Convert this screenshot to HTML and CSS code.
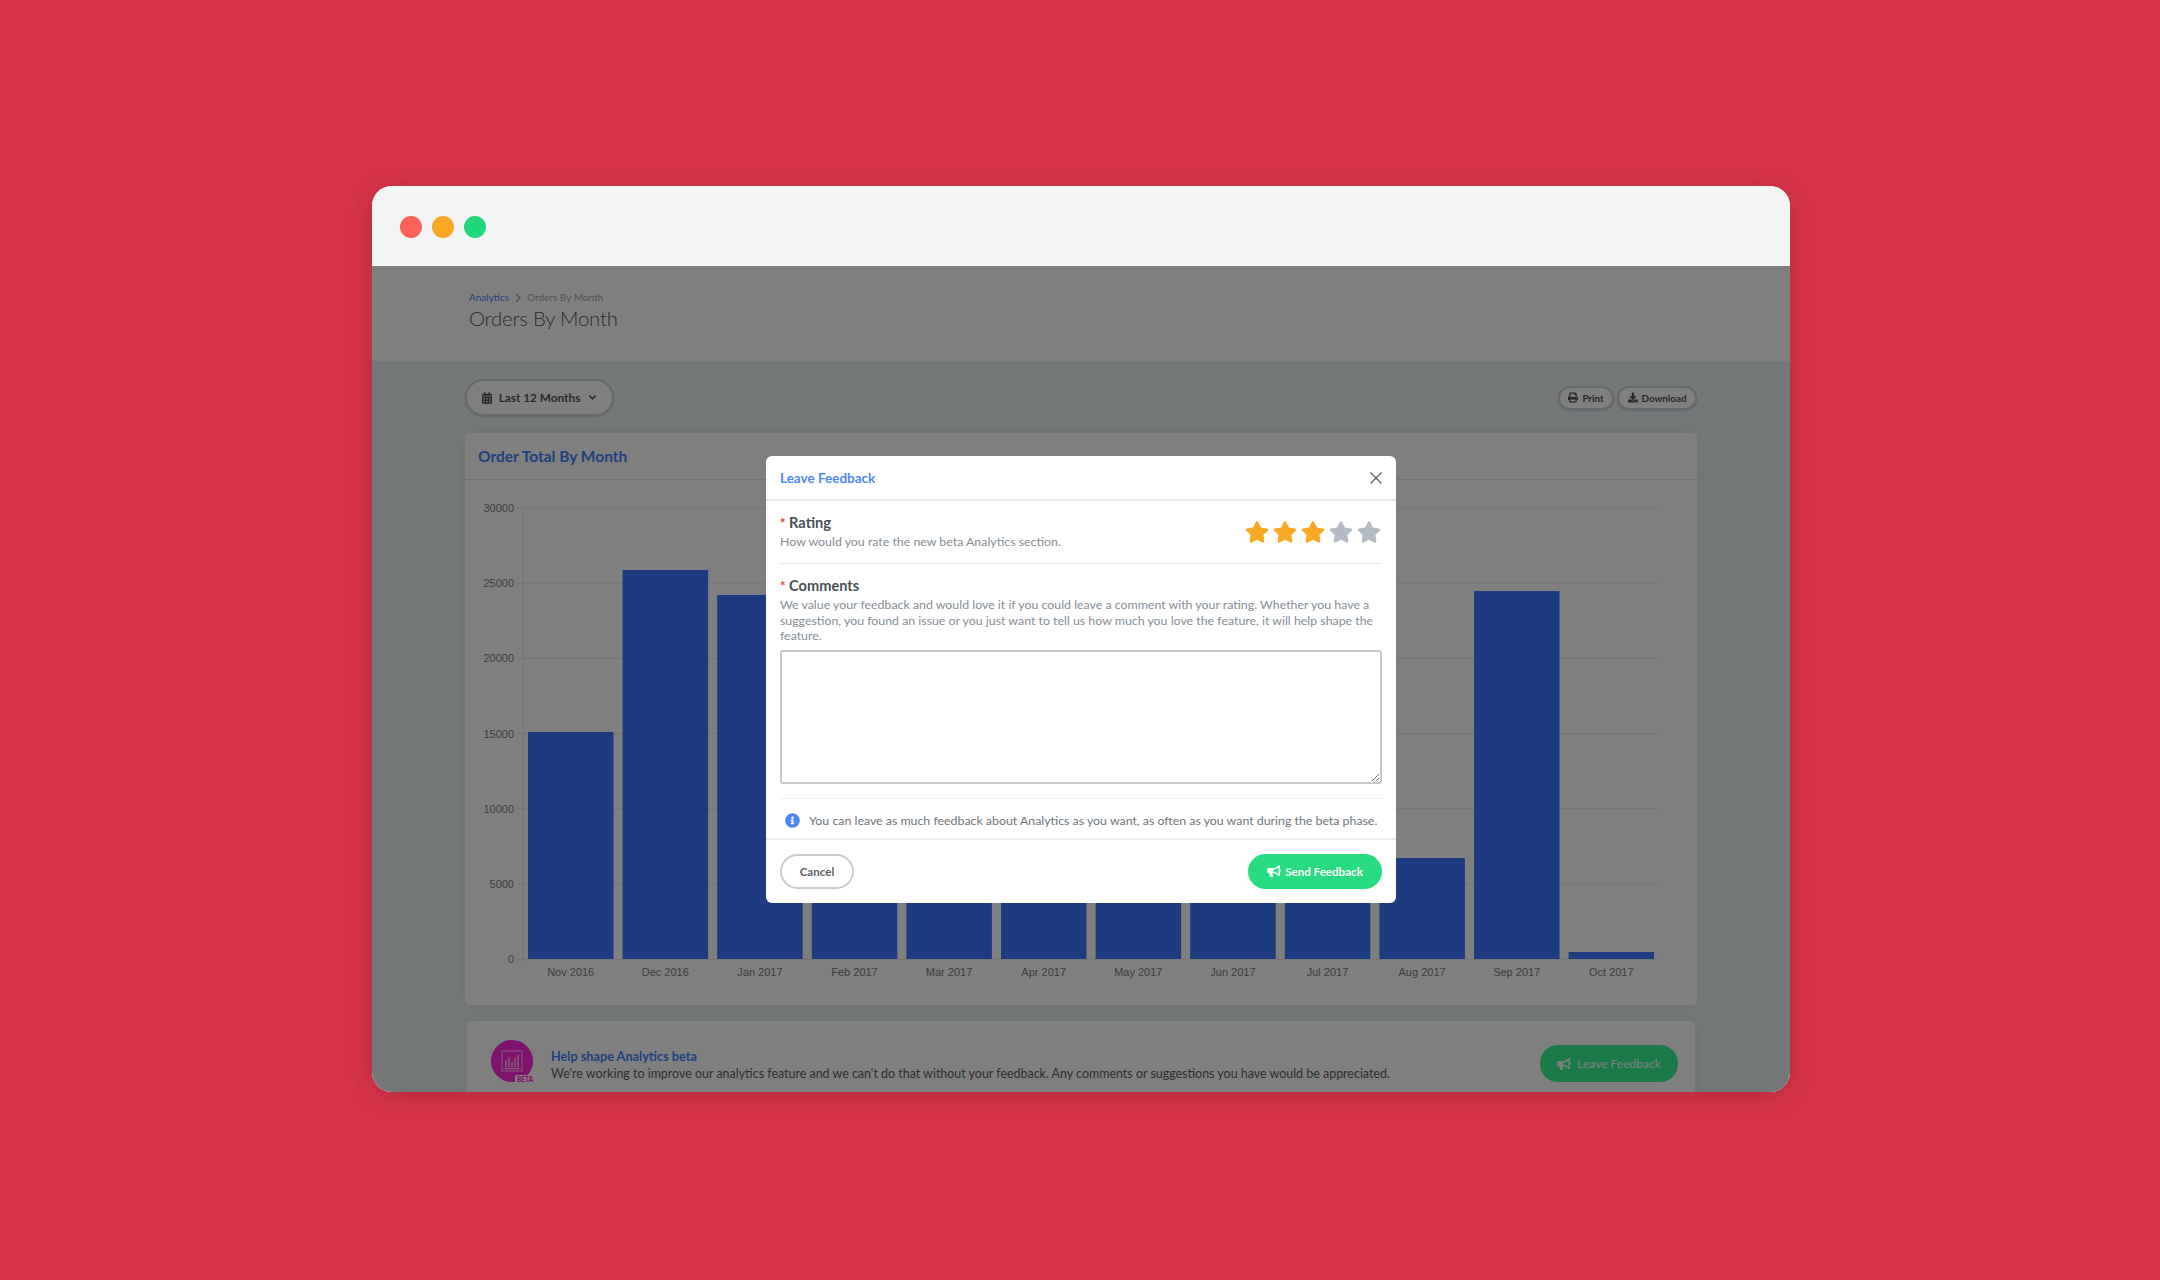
FILE: index.html
```html
<!DOCTYPE html>
<html lang="en">
<head>
<meta charset="utf-8">
<title>Orders By Month</title>
<link rel="stylesheet" href="styles.css">
</head>
<body>
<div class="window">
  <div class="titlebar">
    <span class="dot dot-red"></span>
    <span class="dot dot-amber"></span>
    <span class="dot dot-green"></span>
  </div>
  <div class="main">
    <header class="page-head">
      <div class="crumbs"><a class="crumb-link">Analytics</a>
        <svg class="crumb-sep" viewBox="0 0 8 12"><path d="M2 2l4 4-4 4" fill="none" stroke="currentColor" stroke-width="1.4"/></svg>
        <span>Orders By Month</span></div>
      <h1 class="page-title">Orders By Month</h1>
    </header>
    <div class="content">
      <div class="toolbar">
        <button class="btn btn-range">
          <svg class="ico ico-cal" viewBox="0 0 448 512"><path d="M0 464c0 26.5 21.5 48 48 48h352c26.5 0 48-21.5 48-48V192H0v272zm320-196c0-6.6 5.4-12 12-12h40c6.6 0 12 5.4 12 12v40c0 6.6-5.4 12-12 12h-40c-6.6 0-12-5.4-12-12v-40zm0 128c0-6.6 5.4-12 12-12h40c6.6 0 12 5.4 12 12v40c0 6.6-5.4 12-12 12h-40c-6.6 0-12-5.4-12-12v-40zM192 268c0-6.6 5.4-12 12-12h40c6.6 0 12 5.4 12 12v40c0 6.6-5.4 12-12 12h-40c-6.6 0-12-5.4-12-12v-40zm0 128c0-6.6 5.4-12 12-12h40c6.6 0 12 5.4 12 12v40c0 6.6-5.4 12-12 12h-40c-6.6 0-12-5.4-12-12v-40zM64 268c0-6.6 5.4-12 12-12h40c6.6 0 12 5.4 12 12v40c0 6.6-5.4 12-12 12H76c-6.6 0-12-5.4-12-12v-40zm0 128c0-6.6 5.4-12 12-12h40c6.6 0 12 5.4 12 12v40c0 6.6-5.4 12-12 12H76c-6.6 0-12-5.4-12-12v-40zM400 64h-48V16c0-8.8-7.2-16-16-16h-32c-8.8 0-16 7.2-16 16v48H160V16c0-8.8-7.2-16-16-16h-32c-8.8 0-16 7.2-16 16v48H48C21.5 64 0 85.500 0 112v48h448v-48c0-26.5-21.5-48-48-48z"/></svg>
          <span>Last 12 Months</span>
          <svg class="ico-chev" viewBox="0 0 10 8"><path d="M1.5 1.8L5 5.4l3.5-3.6" fill="none" stroke="currentColor" stroke-width="1.9"/></svg>
        </button>
        <div class="tool-right">
          <button class="btn btn-small btn-print">
            <svg class="ico ico-sm" viewBox="0 0 512 512"><path d="M448 192V77.25c0-8.49-3.37-16.62-9.37-22.63L393.37 9.37c-6-6-14.14-9.37-22.63-9.37H96C78.33 0 64 14.33 64 32v160c-35.35 0-64 28.65-64 64v112c0 8.84 7.16 16 16 16h48v96c0 17.67 14.33 32 32 32h320c17.67 0 32-14.33 32-32v-96h48c8.84 0 16-7.16 16-16V256c0-35.35-28.65-64-64-64zm-64 256H128v-96h256v96zm0-224H128V64h192v48c0 8.84 7.16 16 16 16h48v96zm48 72c-13.25 0-24-10.75-24-24 0-13.26 10.75-24 24-24s24 10.74 24 24c0 13.25-10.75 24-24 24z"/></svg>
            <span>Print</span>
          </button>
          <button class="btn btn-small btn-download">
            <svg class="ico ico-sm" viewBox="0 0 512 512"><path d="M216 0h80c13.3 0 24 10.7 24 24v168h87.7c17.8 0 26.7 21.5 14.1 34.1L269.7 378.3c-7.5 7.5-19.8 7.5-27.3 0L90.1 226.1c-12.6-12.6-3.7-34.1 14.1-34.1H192V24c0-13.3 10.7-24 24-24zm296 376v112c0 13.3-10.7 24-24 24H24c-13.3 0-24-10.7-24-24V376c0-13.3 10.7-24 24-24h146.7l49 49c20.1 20.1 52.5 20.1 72.6 0l49-49H488c13.3 0 24 10.7 24 24zm-124 88c0-11-9-20-20-20s-20 9-20 20 9 20 20 20 20-9 20-20zm64 0c0-11-9-20-20-20s-20 9-20 20 9 20 20 20 20-9 20-20z"/></svg>
            <span>Download</span>
          </button>
        </div>
      </div>

      <section class="card chart-card">
        <h2 class="card-title">Order Total By Month</h2>
        <svg class="chart" viewBox="0 0 1232 526" width="1232" height="526">
          <g class="grid">
            <line x1="52" x2="1193" y1="28" y2="28"/>
            <line x1="52" x2="1193" y1="103.2" y2="103.2"/>
            <line x1="52" x2="1193" y1="178.4" y2="178.4"/>
            <line x1="52" x2="1193" y1="253.6" y2="253.6"/>
            <line x1="52" x2="1193" y1="328.8" y2="328.8"/>
            <line x1="52" x2="1193" y1="404" y2="404"/>
            <line x1="52" x2="1193" y1="479.2" y2="479.2"/>
            <line x1="58" x2="58" y1="28" y2="485"/>
          </g>
          <g class="y-labels">
            <text x="49" y="32">30000</text>
            <text x="49" y="107">25000</text>
            <text x="49" y="182">20000</text>
            <text x="49" y="257.5">15000</text>
            <text x="49" y="333">10000</text>
            <text x="49" y="408">5000</text>
            <text x="49" y="483">0</text>
          </g>
          <g class="bars">
            <rect x="63" y="252" width="85.5" height="227"/>
            <rect x="157.6" y="90" width="85.5" height="389"/>
            <rect x="252.2" y="115" width="85.5" height="364"/>
            <rect x="346.8" y="240" width="85.5" height="239"/>
            <rect x="441.4" y="200" width="85.5" height="279"/>
            <rect x="536" y="220" width="85.5" height="259"/>
            <rect x="630.6" y="180" width="85.5" height="299"/>
            <rect x="725.2" y="260" width="85.5" height="219"/>
            <rect x="819.8" y="300" width="85.5" height="179"/>
            <rect x="914.4" y="378" width="85.5" height="101"/>
            <rect x="1009" y="111" width="85.5" height="368"/>
            <rect x="1103.6" y="472" width="85.5" height="7"/>
          </g>
          <g class="x-labels">
            <text x="105.7" y="496">Nov 2016</text>
            <text x="200.3" y="496">Dec 2016</text>
            <text x="294.9" y="496">Jan 2017</text>
            <text x="389.5" y="496">Feb 2017</text>
            <text x="484.1" y="496">Mar 2017</text>
            <text x="578.7" y="496">Apr 2017</text>
            <text x="673.3" y="496">May 2017</text>
            <text x="767.9" y="496">Jun 2017</text>
            <text x="862.5" y="496">Jul 2017</text>
            <text x="957.1" y="496">Aug 2017</text>
            <text x="1051.7" y="496">Sep 2017</text>
            <text x="1146.3" y="496">Oct 2017</text>
          </g>
        </svg>
      </section>

      <section class="card beta-card">
        <div class="beta-logo">
          <svg class="beta-chart" viewBox="0 0 22 22"><rect x="1" y="1" width="20" height="20" fill="none" stroke="currentColor" stroke-width="1"/><path d="M5 17V10M8 17V7M11 17v-5M14 17V8M17 17V5M3.500 18.500h15" fill="none" stroke="currentColor" stroke-width="1.500"/></svg>
          <span class="beta-badge">BETA</span>
        </div>
        <div class="beta-text">
          <h3 class="beta-title">Help shape Analytics beta</h3>
          <p class="beta-desc">We're working to improve our analytics feature and we can't do that without your feedback. Any comments or suggestions you have would be appreciated.</p>
        </div>
        <button class="btn-pill btn-green btn-beta">
          <svg class="ico ico-horn" viewBox="0 0 576 512"><path d="M576 240c0-23.63-12.95-44.04-32-55.12V32.01C544 23.26 537.02 0 512 0c-7.12 0-14.19 2.38-19.98 7.02l-85.03 68.03C364.28 109.19 310.66 128 256 128H64c-35.35 0-64 28.65-64 64v96c0 35.35 28.65 64 64 64h33.7c-1.39 10.48-2.18 21.14-2.18 32 0 39.77 9.26 77.35 25.56 110.94 5.19 10.69 16.52 17.06 28.4 17.06h74.28c26.05 0 41.69-29.84 25.9-50.56-16.4-21.52-26.15-48.36-26.15-77.44 0-11.11 1.62-21.79 4.41-32H256c54.66 0 108.28 18.81 150.98 52.95l85.03 68.03a32.023 32.023 0 0 0 19.98 7.02c24.92 0 32-22.78 32-32V295.13C563.05 284.04 576 263.63 576 240zm-96 141.42l-33.05-26.44C392.95 311.78 325.12 288 256 288v-96c69.12 0 136.95-23.78 190.95-66.98L480 98.58v282.84z"/></svg>
          <span>Leave Feedback</span>
        </button>
      </section>
    </div>

    <div class="backdrop"></div>

    <div class="modal">
      <div class="modal-head">
        <h2 class="modal-title">Leave Feedback</h2>
        <svg class="modal-close" viewBox="0 0 14 14"><path d="M1.500 1.500l11 11M12.500 1.500l-11 11" fill="none" stroke="currentColor" stroke-width="1.300"/></svg>
      </div>
      <div class="modal-body">
        <div class="rating-row">
          <div>
            <div class="field-label"><span class="req">*</span> Rating</div>
            <div class="field-help field-help-gap">How would you rate the new beta Analytics section.</div>
          </div>
          <div class="stars">
            <svg class="star star-on" viewBox="0 0 576 512"><path d="M259.3 17.8L194 150.2 47.9 171.5c-26.2 3.8-36.7 36.1-17.7 54.6l105.7 103-25 145.5c-4.5 26.3 23.2 46 46.4 33.7L288 439.6l130.7 68.7c23.2 12.2 50.9-7.4 46.4-33.7l-25-145.5 105.7-103c19-18.5 8.5-50.8-17.7-54.6L382 150.2 316.7 17.8c-11.7-23.6-45.6-23.9-57.4 0z"/></svg>
            <svg class="star star-on" viewBox="0 0 576 512"><path d="M259.3 17.8L194 150.2 47.9 171.5c-26.2 3.8-36.7 36.1-17.7 54.6l105.7 103-25 145.5c-4.5 26.3 23.2 46 46.4 33.7L288 439.6l130.7 68.7c23.2 12.2 50.9-7.4 46.4-33.7l-25-145.5 105.7-103c19-18.5 8.5-50.8-17.7-54.6L382 150.2 316.7 17.8c-11.7-23.6-45.6-23.9-57.4 0z"/></svg>
            <svg class="star star-on" viewBox="0 0 576 512"><path d="M259.3 17.8L194 150.2 47.9 171.5c-26.2 3.8-36.7 36.1-17.7 54.6l105.7 103-25 145.5c-4.5 26.3 23.2 46 46.4 33.7L288 439.6l130.7 68.7c23.2 12.2 50.9-7.4 46.4-33.7l-25-145.5 105.7-103c19-18.5 8.5-50.8-17.7-54.6L382 150.2 316.7 17.8c-11.7-23.6-45.6-23.9-57.4 0z"/></svg>
            <svg class="star star-off" viewBox="0 0 576 512"><path d="M259.3 17.8L194 150.2 47.9 171.5c-26.2 3.8-36.7 36.1-17.7 54.6l105.7 103-25 145.5c-4.5 26.3 23.2 46 46.4 33.7L288 439.6l130.7 68.7c23.2 12.2 50.9-7.4 46.4-33.7l-25-145.5 105.7-103c19-18.5 8.5-50.8-17.7-54.6L382 150.2 316.7 17.8c-11.7-23.6-45.6-23.9-57.4 0z"/></svg>
            <svg class="star star-off" viewBox="0 0 576 512"><path d="M259.3 17.8L194 150.2 47.9 171.5c-26.2 3.8-36.7 36.1-17.7 54.6l105.7 103-25 145.5c-4.5 26.3 23.2 46 46.4 33.7L288 439.6l130.7 68.7c23.2 12.2 50.9-7.4 46.4-33.7l-25-145.5 105.7-103c19-18.5 8.5-50.8-17.7-54.6L382 150.2 316.7 17.8c-11.7-23.6-45.6-23.9-57.4 0z"/></svg>
          </div>
        </div>
        <div class="comments">
          <div class="field-label"><span class="req">*</span> Comments</div>
          <p class="field-help field-help-gap">We value your feedback and would love it if you could leave a comment with your rating. Whether you have a suggestion, you found an issue or you just want to tell us how much you love the feature, it will help shape the feature.</p>
          <textarea class="comment-box"></textarea>
        </div>
        <div class="note">
          <svg class="note-ico" viewBox="0 0 512 512"><path d="M256 8C119.043 8 8 119.083 8 256c0 136.997 111.043 248 248 248s248-111.003 248-248C504 119.083 392.957 8 256 8zm0 110c23.196 0 42 18.804 42 42s-18.804 42-42 42-42-18.804-42-42 18.804-42 42-42zm56 254c0 6.627-5.373 12-12 12h-88c-6.627 0-12-5.373-12-12v-24c0-6.627 5.373-12 12-12h12v-64h-12c-6.627 0-12-5.373-12-12v-24c0-6.627 5.373-12 12-12h64c6.627 0 12 5.373 12 12v100h12c6.627 0 12 5.373 12 12v24z"/></svg>
          <span>You can leave as much feedback about Analytics as you want, as often as you want during the beta phase.</span>
        </div>
      </div>
      <div class="modal-foot">
        <button class="btn-pill btn-cancel">Cancel</button>
        <button class="btn-pill btn-green btn-send">
          <svg class="ico ico-horn" viewBox="0 0 576 512"><path d="M576 240c0-23.63-12.95-44.04-32-55.12V32.01C544 23.26 537.02 0 512 0c-7.12 0-14.19 2.38-19.98 7.02l-85.03 68.03C364.28 109.19 310.66 128 256 128H64c-35.35 0-64 28.65-64 64v96c0 35.35 28.65 64 64 64h33.7c-1.39 10.48-2.18 21.14-2.18 32 0 39.77 9.26 77.35 25.56 110.94 5.19 10.69 16.52 17.06 28.4 17.06h74.28c26.05 0 41.69-29.84 25.9-50.56-16.4-21.52-26.15-48.36-26.15-77.44 0-11.11 1.62-21.79 4.41-32H256c54.66 0 108.28 18.81 150.98 52.95l85.03 68.03a32.023 32.023 0 0 0 19.98 7.02c24.92 0 32-22.78 32-32V295.13C563.05 284.04 576 263.63 576 240zm-96 141.42l-33.05-26.44C392.95 311.78 325.12 288 256 288v-96c69.12 0 136.95-23.78 190.95-66.98L480 98.58v282.84z"/></svg>
          <span>Send Feedback</span>
        </button>
      </div>
    </div>
  </div>
</div>
</body>
</html>
```

FILE: styles.css
```css
* { box-sizing: border-box; }
html, body { margin: 0; }
body {
  width: 2160px;
  height: 1280px;
  overflow: hidden;
  background: #d93549;
  padding: 186px 0 0 372px;
  font-family: "Lato", "Liberation Sans", sans-serif;
  color: #666;
}
h1, h2, h3, p { margin: 0; }
button { font-family: inherit; cursor: pointer; }

.window {
  width: 1418px;
  height: 906px;
  border-radius: 20px;
  overflow: hidden;
  background: #fff;
  box-shadow: 0 4px 30px rgba(0, 0, 0, .2);
  display: flex;
  flex-direction: column;
}
.titlebar {
  height: 80px;
  flex: none;
  background: #f4f6f5;
  display: flex;
  align-items: center;
  gap: 10px;
  padding: 2px 0 0 28px;
}
.dot { width: 22px; height: 22px; border-radius: 50%; }
.dot-red { background: #ff6259; }
.dot-amber { background: #f9a825; }
.dot-green { background: #1fd67a; }

.main { position: relative; flex: 1; overflow: hidden; background: #e9efef; }

.page-head {
  height: 95px;
  background: #fff;
  padding: 24px 0 0 97px;
}
.crumbs {
  display: flex;
  align-items: center;
  gap: 4px;
  font-size: 10px;
  line-height: 15px;
  color: #9ea6ad;
}
.crumb-link { color: #4a82f5; }
.crumb-sep { width: 8px; height: 12px; color: #9ea6ad; margin: 0 1px; }
.page-title {
  font-size: 20.300px;
  font-weight: 300;
  letter-spacing: -.2px;
  line-height: 26px;
  color: #555;
}

.content { padding: 18px 93px 0 93px; }
.toolbar { display: flex; justify-content: space-between; align-items: center; height: 37px; }
.tool-right { display: flex; gap: 3px; }
.btn {
  display: flex;
  align-items: center;
  justify-content: center;
  background: #fff;
  border: 2px solid #c8d2da;
  border-radius: 20px;
  color: #555;
  font-weight: 700;
  box-shadow: 0 1px 2px rgba(0, 0, 0, .15);
  padding: 0;
}
.btn-range { width: 149px; height: 37px; font-size: 11.800px; gap: 7px; }
.btn-small { height: 24px; font-size: 9.800px; gap: 4px; }
.btn-print { width: 56px; }
.btn-download { width: 80px; }
.ico { fill: currentColor; flex: none; }
.ico-cal { width: 10px; height: 12px; }
.ico-chev { width: 9px; height: 7px; margin-left: 1px; }
.ico-sm { width: 10px; height: 11px; }
.ico-horn { width: 14px; height: 12px; }

.card {
  background: #fff;
  border-radius: 5px;
  box-shadow: 0 0 14px rgba(0, 0, 0, .06);
}
.chart-card { margin-top: 17px; height: 572px; }
.card-title {
  height: 47px;
  padding: 0 13px;
  border-bottom: 1px solid #e4e6e6;
  font-size: 15.500px;
  font-weight: 700;
  line-height: 46px;
  color: #3f82ff;
}
.chart { display: block; }
.grid line { stroke: #e7e9e9; stroke-width: 1; }
.bars rect { fill: #3878ff; }
.y-labels text { font: 11px "Liberation Sans", sans-serif; fill: #808080; text-anchor: end; }
.x-labels text { font: 11px "Liberation Sans", sans-serif; fill: #808080; text-anchor: middle; }

.beta-card {
  margin: 16px 2px 0;
  height: 100px;
  display: flex;
  align-items: flex-start;
  padding: 19px 17px 0 24px;
}
.beta-logo {
  position: relative;
  width: 42px;
  height: 42px;
  flex: none;
  border-radius: 50%;
  background: #ff24d8;
  color: #ffc0f0;
  display: flex;
  align-items: center;
  justify-content: center;
}
.beta-chart { width: 22px; height: 22px; }
.beta-badge {
  position: absolute;
  right: -2px;
  bottom: -3px;
  background: #fff;
  color: #ff24d8;
  border-radius: 2px;
  font-size: 6.500px;
  font-weight: 900;
  line-height: 10px;
  padding: 0 2px;
}
.beta-text { margin-left: 18px; padding-top: 7px; flex: 1; }
.beta-title { font-size: 12.700px; font-weight: 700; line-height: 18px; color: #3f82ff; }
.beta-desc { font-size: 12.450px; line-height: 18px; color: #606060; }
.btn-pill {
  height: 35px;
  border-radius: 18px;
  border: 0;
  display: flex;
  align-items: center;
  justify-content: center;
  font-weight: 700;
  font-size: 11.600px;
  gap: 4px;
}
.btn-green { background: #27dc80; color: #fff; }
.btn-beta { width: 138px; height: 37px; margin-top: 5px; flex: none; background: #36f48e; font-size: 12px; font-weight: 400; gap: 6px; }

.backdrop { position: absolute; inset: 0; background: rgba(0, 0, 0, .5); }

.modal {
  position: absolute;
  top: 190px;
  left: 394px;
  width: 630px;
  background: #fff;
  border-radius: 6px;
  display: flex;
  flex-direction: column;
}
.modal-head {
  height: 45px;
  flex: none;
  padding: 0 14px;
  border-bottom: 2px solid #e9e9e9;
  display: flex;
  justify-content: space-between;
  align-items: center;
}
.modal-title { font-size: 13.500px; font-weight: 700; color: #4f87f5; }
.modal-close { width: 14px; height: 14px; color: #5a6168; margin-right: -1px; }
.modal-body { padding: 0 14px; }
.rating-row {
  display: flex;
  justify-content: space-between;
  align-items: center;
  padding: 11px 1px 12px 0;
  border-bottom: 1px solid #e9e9e9;
  height: 63px;
}
.stars { display: flex; gap: 4px; margin-top: 0; }
.star { width: 24px; height: 22px; }
.star-on { fill: #f9a825; }
.star-off { fill: #b4bbc4; }
.field-label { font-size: 14.600px; font-weight: 700; line-height: 18px; color: #4a4f55; }
.req { color: #e33; font-size: 13px; }
.field-help { font-size: 12.350px; line-height: 15.500px; color: #858d96; }
.field-help-gap { margin-top: 2px; }
.comments { padding-top: 13px; }
.comment-box {
  display: block;
  width: 100%;
  height: 134px;
  margin-top: 6px;
  border: 2px solid #c3c8cf;
  border-radius: 3px;
  outline: 0;
  background: #fff;
}
.note {
  margin-top: 14px;
  height: 40px;
  padding: 4px 0 0 5px;
  border-top: 1px solid #f0f1f2;
  display: flex;
  align-items: center;
  gap: 9px;
  font-size: 12.350px;
  color: #6e757c;
  white-space: nowrap;
}
.note-ico { width: 15px; height: 15px; fill: #4f87f5; flex: none; }
.modal-foot {
  border-top: 2px solid #ececec;
  padding: 14px;
  display: flex;
  justify-content: space-between;
}
.btn-cancel {
  width: 74px;
  background: #fff;
  border: 2px solid #c8ccd2;
  color: #5a6168;
}
.btn-send { width: 134px; }
```
